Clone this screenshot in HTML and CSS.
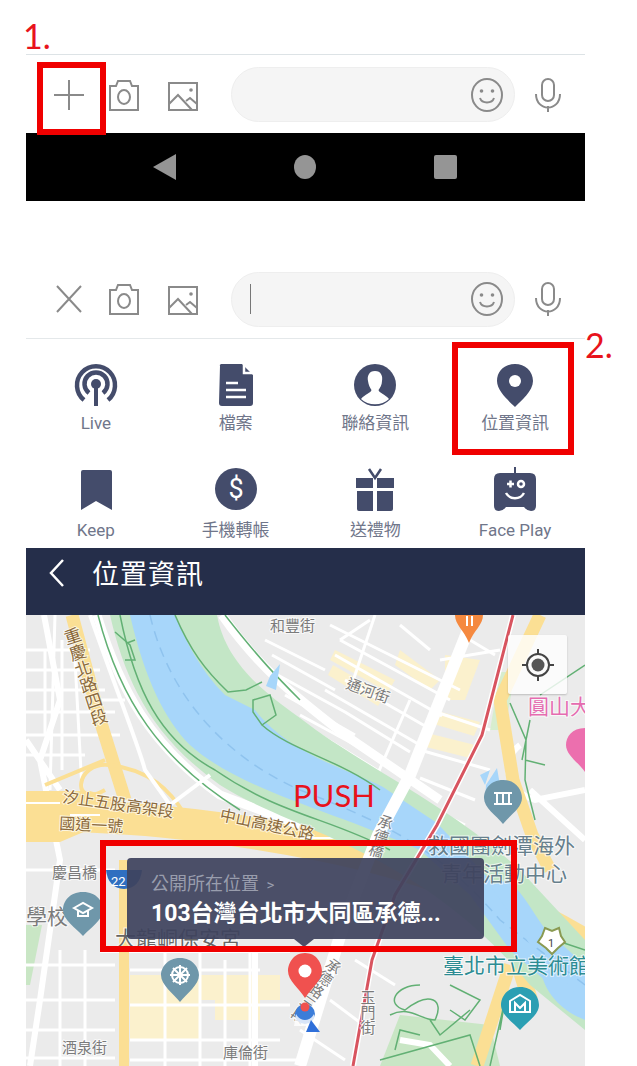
FILE: index.html
```html
<!DOCTYPE html>
<html>
<head lang="en">
    <meta charset="UTF-8">
    <title>位置資訊</title>
    <link rel="stylesheet" href="styles.css">
</head>
<body>
<div id="page">
    <div class="step-title">1.</div>

    <div class="toolbar toolbar-first">
        <svg class="tool tool-toggle" viewBox="0 0 32 36"><path d="M16 3V33M1 18H31"/></svg>
        <svg class="tool tool-camera" viewBox="0 0 32 36"><path d="M2 9H8L10 4H22L24 9H30V33H2Z"/><ellipse cx="16" cy="20" rx="6" ry="7"/></svg>
        <svg class="tool tool-image" viewBox="0 0 32 36"><path d="M2 6H30V33H2ZM2 27L11 18L25 33M19 24L23 21L30 27"/><circle class="dot" cx="24" cy="13" r="1.8"/></svg>
        <div class="pill">
            <svg class="tool" viewBox="0 0 32 36"><ellipse cx="16" cy="18" rx="15" ry="16"/><path d="M9 21C11 27 21 27 23 21"/><circle class="dot" cx="10.500" cy="14" r="1.800"/><circle class="dot" cx="21.500" cy="14" r="1.800"/></svg>
        </div>
        <svg class="tool tool-mic" viewBox="0 0 32 36"><rect x="10" y="2" width="12" height="22" rx="6"/><path d="M4 17C4 35 28 35 28 17M16 29V35"/></svg>
    </div>

    <div class="navbar">
        <svg width="23" height="26" viewBox="0 0 23 26"><path d="M23 0V26L0 13Z"/></svg>
        <svg width="22" height="24" viewBox="0 0 22 24"><ellipse cx="11" cy="12" rx="11" ry="12"/></svg>
        <svg width="23" height="24" viewBox="0 0 23 24"><rect width="23" height="24" rx="2"/></svg>
    </div>

    <div class="toolbar toolbar-second">
        <svg class="tool tool-toggle" viewBox="0 0 32 36"><path d="M4 5L28 31M28 5L4 31"/></svg>
        <svg class="tool tool-camera" viewBox="0 0 32 36"><path d="M2 9H8L10 4H22L24 9H30V33H2Z"/><ellipse cx="16" cy="20" rx="6" ry="7"/></svg>
        <svg class="tool tool-image" viewBox="0 0 32 36"><path d="M2 6H30V33H2ZM2 27L11 18L25 33M19 24L23 21L30 27"/><circle class="dot" cx="24" cy="13" r="1.8"/></svg>
        <div class="pill">
            <span class="cursor"></span>
            <svg class="tool" viewBox="0 0 32 36"><ellipse cx="16" cy="18" rx="15" ry="16"/><path d="M9 21C11 27 21 27 23 21"/><circle class="dot" cx="10.500" cy="14" r="1.800"/><circle class="dot" cx="21.500" cy="14" r="1.800"/></svg>
        </div>
        <svg class="tool tool-mic" viewBox="0 0 32 36"><rect x="10" y="2" width="12" height="22" rx="6"/><path d="M4 17C4 35 28 35 28 17M16 29V35"/></svg>
    </div>

    <div class="menu">
        <div class="menu-item">
            <svg viewBox="0 0 44 44"><path class="line" d="M10 37A19 19 0 1 1 34 37M15 30A11.500 11.500 0 1 1 29 30"/><circle cx="22" cy="21" r="5"/><rect x="20" y="21" width="4" height="22"/></svg>
            <span>Live</span>
        </div>
        <div class="menu-item">
            <svg viewBox="0 0 44 44"><path d="M6 3Q5 2 7 1H28L39 12V40Q39 43 36 43H8Q5 43 5 40Z"/><path class="cut" d="M30 1V10H39M12 20H24M12 27H32M12 34H32"/></svg>
            <span>檔案</span>
        </div>
        <div class="menu-item">
            <svg viewBox="0 0 44 44"><circle cx="22" cy="22" r="21"/><path class="hole" d="M22 8C16 8 14 13 15 18C15.500 22 17 25 18.500 27C18 30 12 31 8 36C15 43 29 43 36 36C32 31 26 30 25.500 27C27 25 29 22 29 18C30 13 28 8 22 8Z"/></svg>
            <span>聯絡資訊</span>
        </div>
        <div class="menu-item">
            <svg viewBox="0 0 44 44"><path d="M22 1C32 1 40 8 40 18C40 28 28 38 22 44C16 38 4 28 4 18C4 8 12 1 22 1Z"/><circle class="hole" cx="22" cy="18" r="6"/></svg>
            <span>位置資訊</span>
        </div>
        <div class="menu-item">
            <svg viewBox="0 0 44 44"><path d="M7 5Q7 3 9 3H36Q38 3 38 5V43L22 34L7 43Z"/></svg>
            <span>Keep</span>
        </div>
        <div class="menu-item">
            <svg viewBox="0 0 44 44"><circle cx="22" cy="22" r="21"/><text class="dollar" x="22" y="31" text-anchor="middle">$</text></svg>
            <span>手機轉帳</span>
        </div>
        <div class="menu-item">
            <svg viewBox="0 0 44 44"><path d="M3 11H20V21H3ZM24 11H41V21H24ZM4 24H20V44H6Q4 44 4 42ZM24 24H40V42Q40 44 38 44H24Z"/><path class="line-thin" d="M16 2L22 11L28 2"/></svg>
            <span>送禮物</span>
        </div>
        <div class="menu-item">
            <svg viewBox="0 0 44 44"><path d="M21 0H23V6H37Q43 6 43 12V39Q43 44 38 44Q34 44 31 40H13Q10 44 6 44Q1 44 1 39V12Q1 6 7 6H21Z"/><path class="cut" d="M14 17H21M17.500 13.500V20.500M13 26C17 33 27 33 31 26"/><circle class="cut" cx="28" cy="17" r="3"/></svg>
            <span>Face Play</span>
        </div>
    </div>

    <div class="header">
        <svg width="15" height="28" viewBox="0 0 15 28"><path d="M14 1L2 14L14 27"/></svg>
        <span>位置資訊</span>
    </div>

    <div class="map">
        <svg class="map-art" width="559" height="451" viewBox="26 615 559 451">
            <rect x="26" y="615" width="559" height="451" fill="#ebebeb"/>

            <!-- pale yellow blocks -->
            <g fill="#fbf1cd">
                <path d="M335 650L395 680L388 692L330 660ZM333 665L385 695L378 706L328 675ZM445 655L480 660L465 700L445 700ZM433 710L480 722L474 736L427 722ZM427 733L475 745L470 758L422 746"/>
                <path d="M400 650L440 680L430 690L395 665Z"/>
                <path d="M130 975H280V1000H200V1040H130ZM215 1000H260V1020H215Z"/>
            </g>

            <!-- park -->
            <path d="M400 1015L490 1025L500 1066H380Z" fill="#c9e6c5"/>
            <path d="M26 925H42L30 985H26Z" fill="#c9e6c5"/>
            <path d="M500 672L515 672L505 730L490 730Z" fill="#d7edcf"/>

            <!-- side streets -->
            <g fill="none" stroke="#fff" stroke-width="3">
                <path d="M26 650H90M26 670H100M26 690H105M26 712H115M26 735H120M26 755H85M55 615L50 790M75 660L82 790M40 760L60 700M45 650V735M62 640V770M100 700H125"/>
                <path d="M265 640L325 670M272 655L335 690M265 668L345 712M285 695L355 735M300 715L368 752M320 735L380 772M340 640L450 700M335 655L442 716M345 680L432 730M325 690L420 745M345 712L410 752M335 745L395 785M330 625L460 690"/>
                <path d="M340 640L370 620M375 615L350 690M400 625L430 650M440 660L500 650M410 700L375 780M430 710L490 730M420 750L490 770M470 640L495 655M420 778L475 800M410 798L465 825M395 815L445 840"/>
                <path d="M26 870H115M26 965H115M26 1000H115M26 1030H115M26 1058H115M60 950V1066M85 950V1066"/>
                <path d="M130 970H260M130 1005H290M130 1040H280M165 950V1066M200 950V1066M250 950V1066M130 1060H300M225 960V1066"/>
                <path d="M355 960L395 985M330 1000L370 1030M300 1030L345 1060"/>
            </g>
            <g fill="none" stroke="#fff" stroke-width="6">
                <path d="M26 740L60 790M44 615L60 700L40 760L60 860L40 1000L30 1066"/>
                <path d="M255 950V1066M100 950H290M400 1040L430 1045L450 1066"/>
                <path d="M520 745C500 760 505 790 535 800L585 790M530 790L585 840M560 960L585 1000"/>
            </g>

            <!-- yellow roads -->
            <g fill="none" stroke="#fbdf94" stroke-linecap="butt">
                <path stroke-width="13" d="M72 615L100 720L125 800"/>
                <path stroke-width="10" d="M124 860V1066"/>
                <path stroke-width="13" d="M540 615L500 700L513 780L532 835L550 870"/>
                <path stroke-width="13" d="M510 965L477 1066"/>
                <path stroke-width="4" d="M105 790C70 810 75 760 110 765C150 770 170 790 185 815"/>
                <path stroke-width="4" d="M45 785L105 760"/>
                <path stroke-width="32" d="M26 815C120 815 220 825 320 845C420 865 500 895 585 945"/>
                <path stroke-width="16" d="M480 840L530 1000"/>
            </g>
            <path d="M26 791H90L120 800L26 810ZM26 825H100L60 842H26Z" fill="#fbdf94"/>
            <path d="M26 803H60M70 815H100M300 838H340" stroke="#fff" stroke-width="2" fill="none"/>

            <!-- river banks and water -->
            <path d="M97 615C120 690 150 745 220 795L300 825" fill="none" stroke="#fff" stroke-width="9"/>
            <path d="M222 615C260 670 300 700 345 735L440 800" fill="none" stroke="#fff" stroke-width="9"/>
            <path d="M110 615C125 680 150 735 220 785C290 830 420 850 530 985L585 1030V940L520 870C450 805 360 765 300 718C260 690 225 660 217 615Z" fill="#c3e6c6"/>
            <path d="M130 615C145 680 165 720 190 745C240 790 330 810 420 850L470 895L510 950L585 1015V965L540 925L490 880L437 823L383 787C350 770 290 755 255 710L225 695C200 670 185 640 175 615Z" fill="#a7d6fa"/>
            <path d="M150 615C165 680 210 750 300 790C390 825 440 850 500 920L585 985" fill="none" stroke="#8fc3ee" stroke-width="1.500" stroke-dasharray="10 7"/>
            <g fill="none" stroke="#62b074" stroke-width="1.500">
                <path d="M120 615C135 690 160 740 215 770C280 815 330 818 390 850"/>
                <path d="M98 615C120 700 160 760 240 810"/>
                <path d="M175 615C190 650 205 670 228 692L246 690L262 682M253 700L270 695L276 715L262 725L253 712ZM262 725C290 750 340 760 380 790"/>
                <path d="M115 632L130 645L135 660L125 660M127 643L135 640"/>
                <path d="M225 615C260 660 280 680 300 700"/>
                <path d="M510 703L526 740L525 780L535 820M530 720L522 760M525 760L545 765M585 665L540 695"/>
                <path d="M420 985C395 985 385 1005 405 1010C430 990 445 1000 435 1020C420 1020 410 1005 390 1015M450 985L480 1000L465 1020L450 1010M430 1020L440 1035L470 1010M380 1060L470 1035L480 1066M500 1030L505 1000L490 1066M420 1035L400 1030L395 1050"/>
                <path d="M540 935L585 950"/>
            </g>
            <path d="M270 676L280 664L276 690L266 686Z" fill="#a7d6fa"/>
            <path d="M480 775L490 770L485 785ZM486 785L497 768L500 785L485 800Z" fill="#a7d6fa"/>
            <path d="M540 960C560 960 565 990 585 1000V1020C560 1010 540 990 540 960Z" fill="#a7d6fa"/>
            <path d="M508 880C530 900 535 920 555 940L530 945C515 920 500 900 490 885Z" fill="#a7d6fa"/>

            <!-- main road and metro line -->
            <path d="M472 620L410 775L378 835L345 920L300 1066" fill="none" stroke="#fff" stroke-width="12"/>
            <path d="M90 615C120 700 140 750 145 770L170 805L210 775" fill="none" stroke="#fff" stroke-width="4"/>
            <path d="M513 615L482 735L437 825L395 895L372 960L353 1066" fill="none" stroke="#fff" stroke-width="6"/>
            <path d="M513 615L482 735L437 825L395 895L372 960L353 1066" fill="none" stroke="#d8545f" stroke-width="3"/>

            <!-- labels -->
            <g class="label-road">
                <text x="270" y="631">和豐街</text>
                <text transform="translate(345 688) rotate(20)">通河街</text>
                <text class="label-brown fs-17" transform="translate(70 628) rotate(-18)" writing-mode="vertical-rl">重慶北路四段</text>
                <text class="label-brown fs-16" transform="translate(62 802) rotate(8)">汐止五股高架段</text>
                <text class="label-brown fs-16" transform="translate(59 829) rotate(3)">國道一號</text>
                <text class="label-brown fs-16" transform="translate(219 820) rotate(12)">中山高速公路</text>
                <text transform="translate(388 815) rotate(18)" writing-mode="vertical-rl">承德橋</text>
                <text x="52" y="878">慶昌橋</text>
                <text class="fs-21" x="26" y="924">學校</text>
                <text x="62" y="1053">酒泉街</text>
                <text x="223" y="1058">庫倫街</text>
                <text transform="translate(338 960) rotate(35)" writing-mode="vertical-rl">承德路三段</text>
                <text transform="translate(368 990)" writing-mode="vertical-rl">玉門街</text>
                <text class="fs-21 label-dark" x="115" y="946">大龍峒保安宮</text>
                <text class="label-slate fs-21" x="428" y="853">救國團劍潭海外</text>
                <text class="label-slate fs-21" x="441" y="881">青年活動中心</text>
                <text class="label-teal fs-21" x="443" y="973">臺北市立美術館</text>
                <text class="label-pink fs-21" x="528" y="714">圓山大</text>
            </g>

            <!-- highway signs -->
            <path d="M106 870H142Q140 888 124 889Q108 888 106 870Z" fill="#2f6fc0"/>
            <text class="sign-number fs-13" x="111" y="886">22</text>
            <path d="M545 928L552 931L559 928L561 936L565 942L558 948L552 954L546 948L538 942L542 936Z" fill="#fff" stroke="#8a9a52" stroke-width="2"/>
            <text class="sign-number dark fs-11" x="548" y="947">1</text>

            <!-- pins -->
            <g fill="#6f97aa">
                <path d="M503 780C516 780 522 790 522 798C522 808 510 815 503 824C496 815 484 808 484 798C484 790 490 780 503 780Z"/>
                <path d="M83 892C97 892 103 902 103 910C103 920 90 928 83 936C76 928 63 920 63 910C63 902 69 892 83 892Z"/>
                <path d="M180 958C193 958 199 968 199 975C199 985 187 993 180 1002C173 993 161 985 161 975C161 968 167 958 180 958Z"/>
            </g>
            <path d="M520 987C533 987 539 997 539 1005C539 1015 527 1022 520 1030C513 1022 501 1015 501 1005C501 997 507 987 520 987Z" fill="#2b9fb3"/>
            <path d="M585 728C572 728 566 737 566 745C566 755 578 762 585 772Z" fill="#ec6fae"/>
            <path d="M455 615C455 625 464 630 469 643C474 630 483 625 483 615Z" fill="#f5893f"/>
            <g fill="none" stroke="#fff" stroke-width="2">
                <path d="M494 793H512M497 793V804M503 793V804M509 793V804M494 804H512"/>
                <path d="M74 908L83 903L92 908L83 913ZM78 911V916H88V911"/>
                <circle cx="180" cy="975" r="8"/><path d="M180 965V985M170 975H190M173 968L187 982M187 968L173 982"/>
                <path d="M510 1001L520 995L530 1001V1012H510ZM515 1011V1003L520 1008L525 1003V1011"/>
                <path d="M467 616V626M472 616V626"/>
            </g>
            <path d="M305 953C317 953 322 964 322 971C322 981 311 988 305 998C299 988 288 981 288 971C288 964 293 953 305 953Z" fill="#f0514f"/>
            <circle cx="305" cy="971" r="6.500" fill="#fff"/>
            <circle cx="305" cy="1014" r="10" fill="#3c7dd9"/>
            <path d="M296 1014C300 1022 310 1022 314 1014L318 1026H294Z" fill="#fff" opacity="0.800"/>
            <circle cx="305" cy="1007" r="4.500" fill="#f0514f"/>
            <path d="M311 1020L320 1032H306Z" fill="#2f6fd9"/>
        </svg>

        <div class="locate">
            <svg width="34" height="34" viewBox="0 0 34 34"><circle class="ring" cx="17" cy="17" r="11"/><circle cx="17" cy="17" r="6.500"/><path class="ring" d="M17 1V6M17 28V33M1 17H6M28 17H33"/></svg>
        </div>

        <div class="tip">
            <div class="tip-sub">公開所在位置 <span>&gt;</span></div>
            <div class="tip-addr">103台灣台北市大同區承德...</div>
        </div>

        <div class="push">PUSH</div>
    </div>

    <div class="step-title step-two">2.</div>
    <div class="mark mark-plus"></div>
    <div class="mark mark-menu"></div>
    <div class="mark mark-tip"></div>
</div>
</body>
</html>
```

FILE: styles.css
```css
*{
    padding: 0;
    margin: 0;
    box-sizing: border-box;
}
html,body{
    background-color: #ffffff;
    overflow: hidden;
}
#page{
    width: 637px;
    height: 1066px;
    position: relative;
    padding-left: 26px;
    font-family: Roboto, "Noto Sans CJK TC", sans-serif;
}
#page > .toolbar,
#page > .navbar,
#page > .menu,
#page > .header,
#page > .map{
    width: 559px;
}

/* step numbers and red marks */
.step-title{
    height: 54px;
    margin-left: -3px;
    padding-top: 14px;
    font-family: Lato, sans-serif;
    font-size: 34px;
    line-height: 44px;
    color: #e8131c;
}
.step-two{
    position: absolute;
    left: 585px;
    top: 309px;
    margin: 0;
}
.push{
    position: absolute;
    left: 267px;
    top: 160px;
    font-family: Lato, sans-serif;
    font-size: 31px;
    line-height: 40px;
    color: #e8131c;
}
.mark{
    position: absolute;
    border: 6px solid #f00000;
}
.mark-plus{
    left: 37px;
    top: 62px;
    width: 69px;
    height: 73px;
}
.mark-menu{
    left: 452px;
    top: 342px;
    width: 122px;
    height: 113px;
}
.mark-tip{
    left: 100px;
    top: 840px;
    width: 417px;
    height: 112px;
}

/* input bars */
.toolbar{
    display: flex;
    align-items: center;
    padding-left: 27px;
    background-color: #ffffff;
}
.toolbar-first{
    height: 79px;
    padding-top: 1px;
    border-top: 1px solid #dde3e6;
}
.toolbar-second{
    height: 138px;
    padding-top: 70px;
    padding-bottom: 11px;
    border-bottom: 1px solid #e4e8ea;
}
.tool{
    width: 32px;
    height: 36px;
    flex: none;
    fill: none;
    stroke: #8a8a8a;
    stroke-width: 2;
}
.tool .dot{
    fill: #8a8a8a;
    stroke: none;
}
.tool-camera{
    margin-left: 23px;
}
.tool-image{
    margin-left: 27px;
}
.tool-mic{
    margin-left: 17px;
}
.pill{
    width: 284px;
    height: 55px;
    margin-left: 32px;
    padding: 0 11px 0 18px;
    display: flex;
    align-items: center;
    justify-content: flex-end;
    position: relative;
    background-color: #f5f5f5;
    border: 1px solid #eeeeee;
    border-radius: 28px;
}
.cursor{
    width: 1px;
    height: 30px;
    margin-right: auto;
    background-color: #777777;
}

/* android buttons */
.navbar{
    height: 68px;
    display: flex;
    align-items: center;
    gap: 118px;
    padding-left: 127px;
    background-color: #000000;
}
.navbar svg{
    fill: #959595;
}

/* attachment menu */
.menu{
    height: 209px;
    display: grid;
    grid-template-columns: repeat(4, 1fr);
    grid-template-rows: 104px 105px;
    padding-top: 24px;
}
.menu-item{
    display: flex;
    flex-direction: column;
    align-items: center;
}
.menu-item svg{
    width: 44px;
    height: 44px;
    fill: #444c6b;
}
.menu-item span{
    margin-top: 5px;
    font-size: 17px;
    line-height: 22px;
    color: #70768a;
}
.menu-item:nth-child(n+5) span{
    margin-top: 8px;
}
.menu-item .line{
    fill: none;
    stroke: #444c6b;
    stroke-width: 4.500;
}
.menu-item .line-thin{
    fill: none;
    stroke: #444c6b;
    stroke-width: 2.500;
}
.menu-item .cut{
    fill: none;
    stroke: #ffffff;
    stroke-width: 2.500;
}
.menu-item .hole{
    fill: #ffffff;
}
.menu-item .dollar{
    font-family: Roboto, sans-serif;
    font-size: 27px;
    fill: #ffffff;
}

/* title bar */
.header{
    height: 67px;
    display: flex;
    align-items: center;
    gap: 28px;
    padding-left: 23px;
    padding-bottom: 18px;
    background-color: #252e4a;
    color: #ffffff;
    font-size: 27px;
    letter-spacing: 1px;
}
.header svg{
    fill: none;
    stroke: #ffffff;
    stroke-width: 2.500;
}

/* map */
.map{
    height: 451px;
    position: relative;
    overflow: hidden;
}
.map-art{
    display: block;
}
.label-road text{
    font-family: "Noto Sans CJK TC", sans-serif;
    font-size: 15px;
    fill: #7b7b7b;
    stroke: #ffffff;
    stroke-width: 2px;
    stroke-opacity: 0.7;
    paint-order: stroke;
}
.label-road .fs-16{
    font-size: 16px;
}
.label-road .fs-17{
    font-size: 17px;
}
.label-road .fs-21{
    font-size: 21px;
}
.label-road .label-brown{
    fill: #8b6a3c;
}
.label-road .label-dark{
    fill: #666666;
}
.label-road .label-slate{
    fill: #667f8c;
}
.label-road .label-teal{
    fill: #2c8c93;
}
.label-road .label-pink{
    fill: #e56cb0;
}
.sign-number{
    font-family: Roboto, sans-serif;
    fill: #ffffff;
}
.sign-number.dark{
    fill: #444444;
}
.fs-13{
    font-size: 13px;
}
.fs-11{
    font-size: 11px;
}
.locate{
    position: absolute;
    left: 482px;
    top: 20px;
    width: 59px;
    height: 59px;
    display: flex;
    align-items: center;
    justify-content: center;
    background-color: rgba(255,255,255,0.8);
    border-radius: 2px;
    box-shadow: 0 1px 2px rgba(0,0,0,0.2);
}
.locate svg{
    fill: #555555;
}
.locate .ring{
    fill: none;
    stroke: #444444;
    stroke-width: 2;
}
.tip{
    position: absolute;
    left: 101px;
    top: 243px;
    width: 357px;
    height: 81px;
    padding: 13px 0 0 24px;
    background-color: rgba(62,67,94,0.93);
    border-radius: 4px;
}
.tip:after{
    content: "";
    position: absolute;
    left: 167px;
    bottom: -8px;
    border-top: 8px solid rgba(62,67,94,0.93);
    border-left: 10px solid transparent;
    border-right: 10px solid transparent;
}
.tip-sub{
    font-size: 18px;
    line-height: 25px;
    color: #999dad;
}
.tip-sub span{
    margin-left: 3px;
    font-size: 15px;
}
.tip-addr{
    font-size: 23px;
    line-height: 31px;
    font-weight: bold;
    color: #ffffff;
}
```
